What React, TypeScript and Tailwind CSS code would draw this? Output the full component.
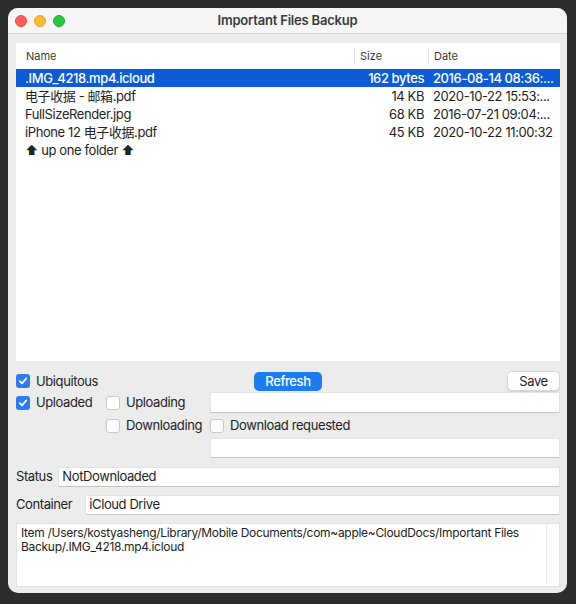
import React from "react";

type Row = { name: string; size: string; date: string };

const rows: Row[] = [
  { name: ".IMG_4218.mp4.icloud", size: "162 bytes", date: "2016-08-14 08:36:..." },
  { name: "电子收据 - 邮箱.pdf", size: "14 KB", date: "2020-10-22 15:53:..." },
  { name: "FullSizeRender.jpg", size: "68 KB", date: "2016-07-21 09:04:..." },
  { name: "iPhone 12 电子收据.pdf", size: "45 KB", date: "2020-10-22 11:00:32" },
  { name: "⬆ up one folder ⬆", size: "", date: "" },
];

function Checkbox({ checked, label }: { checked?: boolean; label: string }) {
  return (
    <div className="flex items-center gap-[6px]">
      {checked ? (
        <div className="w-[14px] h-[14px] rounded-[3px] bg-[#2b7bf3] flex items-center justify-center">
          <svg width="10" height="10" viewBox="0 0 10 10">
            <path d="M1.8 5.2 L4 7.4 L8.3 2.4" fill="none" stroke="white" strokeWidth="1.7" strokeLinecap="round" strokeLinejoin="round" />
          </svg>
        </div>
      ) : (
        <div className="w-[14px] h-[14px] rounded-[3px] bg-white border border-[#c9c9c9]" />
      )}
      <span className="pt-[1px]">{label}</span>
    </div>
  );
}

function Field({ value, className = "" }: { value?: string; className?: string }) {
  return (
    <div className={"h-[20px] bg-white border border-[#e3e3e3] border-b-[#c6c6c6] flex items-center px-[3px] " + className}>
      {value}
    </div>
  );
}

export default function App() {
  return (
    <div
      className="w-[576px] h-[604px] bg-[#2d2d2d] pt-[8px] pl-[8px] text-[13px] tracking-[-0.4px] text-[#232323]"
      style={{ fontFamily: 'Inter, "Noto Sans CJK SC", sans-serif' }}
    >
      <div className="w-[559px] h-[585px] rounded-[10px] bg-[#ececec] flex flex-col overflow-hidden">
        {/* title bar */}
        <div className="h-[26px] shrink-0 bg-[#f6f6f6] border-b border-[#d3d3d3] grid grid-cols-[1fr_auto_1fr] items-center">
          <div className="flex items-center gap-[7px] pl-[7px] pt-[1px]">
            <div className="w-[12px] h-[12px] rounded-full bg-[#fe5f57] border border-[#e14942]" />
            <div className="w-[12px] h-[12px] rounded-full bg-[#febc2e] border border-[#dfa023]" />
            <div className="w-[12px] h-[12px] rounded-full bg-[#28c840] border border-[#1aab29]" />
          </div>
          <div className="font-semibold text-[#3b3b3b] pt-[1px] tracking-[-0.2px]">Important Files Backup</div>
          <div />
        </div>

        <div className="flex flex-col pl-[8px] pr-[7px] pt-[9px]">
          {/* table */}
          <div className="h-[318px] bg-white flex flex-col">
            <div className="h-[26px] flex items-center text-[11px] tracking-normal text-[#3a3a3a] pt-[1px]">
              <div className="w-[338px] pl-[10px]">Name</div>
              <div className="w-[74px] h-[17px] border-l border-[#e4e4e4] pl-[5px] flex items-center">Size</div>
              <div className="flex-1 h-[17px] border-l border-[#e4e4e4] pl-[5px] flex items-center">Date</div>
            </div>
            {rows.map((r, i) => (
              <div
                key={i}
                className={
                  "h-[18px] flex items-center pt-[1px] " +
                  (i === 0 ? "bg-[#0d5bd6] text-white font-medium" : "")
                }
              >
                <div className="w-[338px] pl-[9px] truncate">{r.name}</div>
                <div className="w-[74px] text-right pr-[4px]">{r.size}</div>
                <div className="flex-1 pl-[5px] whitespace-nowrap">{r.date}</div>
              </div>
            ))}
          </div>

          {/* controls */}
          <div className="grid grid-cols-[1fr_auto_1fr] items-center mt-[10px] h-[20px]">
            <Checkbox checked label="Ubiquitous" />
            <div className="w-[68px] h-[19px] rounded-[5px] bg-[#1c7cf4] text-white font-medium flex items-center justify-center">
              Refresh
            </div>
            <div className="justify-self-end w-[53px] h-[20px] rounded-[5px] bg-white border border-[#d8d8d8] shadow-[0_1px_1px_rgba(0,0,0,0.12)] flex items-center justify-center">
              Save
            </div>
          </div>

          <div className="grid grid-cols-[90px_104px_1fr] grid-rows-[21px_21px_20px] items-center mt-[1px] gap-y-[2px]">
            <Checkbox checked label="Uploaded" />
            <Checkbox label="Uploading" />
            <Field className="h-[21px]" />
            <div />
            <Checkbox label="Downloading" />
            <Checkbox label="Download requested" />
            <div />
            <div />
            <Field />
          </div>

          <div className="flex items-center mt-[9px] gap-[6px]">
            <span>Status</span>
            <Field value="NotDownloaded" className="flex-1" />
          </div>
          <div className="flex items-center mt-[8px] gap-[13px]">
            <span>Container</span>
            <Field value="iCloud Drive" className="flex-1" />
          </div>

          <div className="mt-[8px] h-[64px] bg-white border border-[#e3e3e3] flex text-[12px] leading-[14px] tracking-[-0.3px]">
            <div className="flex-1 px-[4px] pt-[2px]">
              Item /Users/kostyasheng/Library/Mobile Documents/com~apple~CloudDocs/Important Files Backup/.IMG_4218.mp4.icloud
            </div>
            <div className="w-[13px] border-l border-[#ececec]" />
          </div>
        </div>
      </div>
    </div>
  );
}
